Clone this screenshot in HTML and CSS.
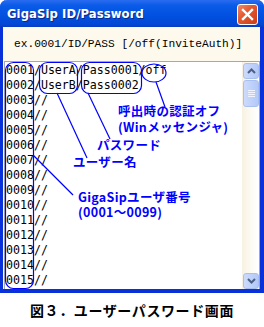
FILE: index.html
```html
<!DOCTYPE html>
<html lang="ja">
<head>
    <meta charset="UTF-8">
    <title>GigaSip ID/Password</title>
    <link rel="stylesheet" href="styles.css">
</head>
<body>
    <div class="window">
        <div class="titlebar">
            <span class="title">GigaSip ID/Password</span>
            <span class="close">
                <svg width="13" height="13" viewBox="0 0 13 13"><path d="M2 2 L11 11 M11 2 L2 11" stroke="#fff" stroke-width="2.4" stroke-linecap="square"/></svg>
            </span>
        </div>

        <div class="hint">ex.0001/ID/PASS [/off(InviteAuth)]</div>

        <div class="editor">
            <div class="lines">
                <div>0001/UserA/Pass0001/off</div>
                <div>0002/UserB/Pass0002</div>
                <div>0003//</div>
                <div>0004//</div>
                <div>0005//</div>
                <div>0006//</div>
                <div>0007//</div>
                <div>0008//</div>
                <div>0009//</div>
                <div>0010//</div>
                <div>0011//</div>
                <div>0012//</div>
                <div>0013//</div>
                <div>0014//</div>
                <div>0015//</div>
            </div>
            <div class="scrollbar">
                <div class="sb-btn">
                    <svg width="9" height="6" viewBox="0 0 9 6"><path d="M1 5 L4.5 1.5 L8 5" fill="none" stroke="#4d6185" stroke-width="2"/></svg>
                </div>
                <div class="sb-thumb">
                    <span></span><span></span><span></span><span></span>
                </div>
                <div class="sb-track"></div>
                <div class="sb-btn">
                    <svg width="9" height="6" viewBox="0 0 9 6"><path d="M1 1 L4.5 4.5 L8 1" fill="none" stroke="#4d6185" stroke-width="2"/></svg>
                </div>
            </div>
        </div>

        <!-- annotations drawn over the dialog -->
        <svg class="notes" width="264" height="293" viewBox="0 0 264 293">
            <g class="marks">
                <rect x="5.5" y="62.5" width="28" height="226" rx="8"/>
                <rect x="39.5" y="62.5" width="38" height="31" rx="8"/>
                <rect x="81.5" y="62.5" width="60" height="31" rx="8"/>
                <ellipse cx="154" cy="73" rx="12" ry="9"/>
                <path d="M156 82 L165 107"/>
                <path d="M88 93 L110 139"/>
                <path d="M57 93 L87 158"/>
                <path d="M33 155 L73 195"/>
            </g>
            <g class="note-text">
                <text x="118" y="116">呼出時の認証オフ<tspan x="118" dy="16">(Winメッセンジャ)</tspan></text>
                <text x="97" y="150">パスワード</text>
                <text x="73" y="167">ユーザー名</text>
                <text x="78" y="202">GigaSipユーザ番号<tspan x="78" dy="15">(0001～0099)</tspan></text>
            </g>
        </svg>
    </div>

    <p class="caption">図３．ユーザーパスワード画面</p>
</body>
</html>
```

FILE: styles.css
```css
body {
    margin: 0;
    background: #fff;
    width: 264px;
}

.window {
    position: relative;
    height: 293px;
    box-sizing: border-box;
    background: #fdf9ec;
    border: 3px solid #0831d9;
    border-top: none;
    border-bottom-width: 4px;
    border-right-width: 4px;
    border-radius: 7px 7px 0 0;
    display: flex;
    flex-direction: column;
}

.titlebar {
    height: 27px;
    margin: 0 -4px 0 -3px;
    padding: 0 6px 0 7px;
    display: flex;
    align-items: center;
    justify-content: space-between;
    border-radius: 7px 7px 0 0;
    background: linear-gradient(#2a6cf0 0%, #0a5be8 20%, #0150e0 60%, #0347d5 90%, #0a3bc0 100%);
}

.title {
    font-family: "DejaVu Sans", sans-serif;
    font-weight: bold;
    font-size: 11.6px;
    color: #fff;
    letter-spacing: 0.1px;
    text-shadow: 1px 1px 0 #0a2a8a;
}

.close {
    width: 19px;
    height: 19px;
    margin-top: 1px;
    border: 1px solid #fff;
    border-radius: 3px;
    background: linear-gradient(135deg, #f08a6a 0%, #e35a32 40%, #cc3c17 100%);
    display: flex;
    align-items: center;
    justify-content: center;
}

.hint {
    height: 34px;
    padding-left: 11px;
    display: flex;
    align-items: center;
    font-family: "Liberation Mono", monospace;
    font-size: 11.2px;
    color: #000;
}

.editor {
    flex: 1;
    display: flex;
    margin: 0 0 0 1px;
    border: 1px solid #a7a6aa;
    border-bottom: none;
    background: #fff;
    overflow: hidden;
}

.lines {
    flex: 1;
    padding: 1px 0 0 1px;
    font-family: "DejaVu Sans Mono", monospace;
    font-size: 11.6px;
    line-height: 15px;
    color: #000;
}

.scrollbar {
    width: 17px;
    display: flex;
    flex-direction: column;
    background: linear-gradient(90deg, #f6f1e2, #fdfbf5 60%, #fff);
}

.sb-btn, .sb-thumb {
    box-sizing: border-box;
    margin: 1px 0 0 1px;
    width: 16px;
    border: 1px solid #a9c0ef;
    border-radius: 3px;
    background: linear-gradient(90deg, #cddbfb, #bcd0fa 60%, #b3c8f7);
    display: flex;
    align-items: center;
    justify-content: center;
}

.sb-btn {
    height: 16px;
}

.sb-thumb {
    height: 27px;
    flex-direction: column;
    gap: 1px;
}

.sb-thumb span {
    display: block;
    width: 7px;
    height: 1px;
    background: #eef3ff;
}

.sb-track {
    flex: 1;
}

.notes {
    position: absolute;
    left: -3px;
    top: 0;
    pointer-events: none;
}

.marks {
    fill: none;
    stroke: #0000ff;
    stroke-width: 1.2;
}

.note-text {
    font-family: "Noto Sans CJK JP", sans-serif;
    font-weight: bold;
    font-size: 12.5px;
    letter-spacing: 0.3px;
    fill: #0000ff;
}

.caption {
    margin: 8px 0 0;
    text-align: center;
    font-family: "Noto Sans CJK JP", sans-serif;
    font-weight: bold;
    font-size: 14px;
    line-height: 18px;
    letter-spacing: 0.6px;
    color: #000;
    text-decoration: underline;
    text-underline-offset: 4px;
}
```
